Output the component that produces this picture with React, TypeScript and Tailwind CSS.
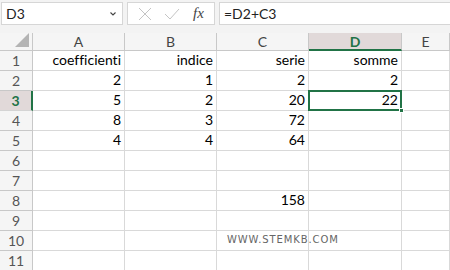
import React from "react";

const cols = ["A", "B", "C", "D", "E"];
const data: Record<number, string[]> = {
  1: ["coefficienti", "indice", "serie", "somme"],
  2: ["2", "1", "2", "2"],
  3: ["5", "2", "20", "22"],
  4: ["8", "3", "72", ""],
  5: ["4", "4", "64", ""],
  8: ["", "", "158", ""],
};

export default function App() {
  const rows = [1, 2, 3, 4, 5, 6, 7, 8, 9, 10, 11];
  return (
    <div className="w-[450px] h-[270px] overflow-hidden bg-white [font-variant-ligatures:none]" style={{ fontFamily: "Lato, 'Liberation Sans', sans-serif" }}>
      {/* toolbar */}
      <div className="h-[33px] bg-[#f3f3f3] flex items-start pt-[2px] pl-[1px]">
        <div className="w-[122px] h-[23px] bg-white border border-[#d6d6d6] flex items-center justify-between px-[4px] text-[14px] text-[#222]">
          <span>D3</span>
          <svg width="8" height="6" viewBox="0 0 8 6" className="mr-[1px]"><path d="M1.5 1.5 L4 4 L6.5 1.5" fill="none" stroke="#444" strokeWidth="1.1" /></svg>
        </div>
        <div className="ml-[4px] w-[88px] h-[23px] bg-white border border-[#d6d6d6] flex items-center">
          <svg width="14" height="14" viewBox="0 0 14 14" className="ml-[10px]"><path d="M1 1 L13 13 M13 1 L1 13" stroke="#c4c4c4" strokeWidth="1" fill="none" /></svg>
          <svg width="16" height="14" viewBox="0 0 16 14" className="ml-[12px]"><path d="M1 7 L6 12 L15 2" stroke="#c4c4c4" strokeWidth="1" fill="none" /></svg>
          <span className="ml-[13px] text-[15px] italic text-[#444]" style={{ fontFamily: "'Liberation Serif', serif" }}>fx</span>
        </div>
        <div className="ml-[4px] flex-1 h-[23px] bg-white border border-[#d6d6d6] border-r-0 flex items-center pl-[4px] text-[14px] text-[#222]">
          =D2+C3
        </div>
      </div>
      {/* grid */}
      <div className="grid grid-cols-[33px_92px_92px_92px_93px_1fr] grid-rows-[18px_repeat(11,20px)]">
        <div className="bg-[#f5f5f5] border-r border-b border-[#c8c8c8] relative">
          <svg width="16" height="16" viewBox="0 0 16 16" className="absolute right-[2px] bottom-[2px]"><path d="M15 1 L15 15 L1 15 Z" fill="#b4b4b4" /></svg>
        </div>
        {cols.map((c) =>
          c === "D" ? (
            <div key={c} className="bg-[#e1d9d9] border-r border-[#c8c8c8] border-b-2 border-b-[#217346] flex items-center justify-center text-[14px] font-bold text-[#217346]">
              {c}
            </div>
          ) : (
            <div key={c} className="bg-[#f5f5f5] border-r border-b border-[#c8c8c8] flex items-center justify-center text-[14px] text-[#444]">
              {c}
            </div>
          )
        )}
        {rows.map((r) => (
          <React.Fragment key={r}>
            {r === 3 ? (
              <div className="bg-[#e1d9d9] border-r-2 border-r-[#217346] border-b border-[#d4d4d4] flex items-center justify-center text-[14px] font-bold text-[#217346]">
                {r}
              </div>
            ) : (
              <div className="bg-[#f5f5f5] border-r border-b border-[#c8c8c8] flex items-center justify-center text-[14px] text-[#555]">
                {r}
              </div>
            )}
            {cols.map((c, ci) => {
              const v = data[r]?.[ci] ?? "";
              const selected = r === 3 && c === "D";
              return (
                <div key={c} className="relative border-r border-b border-[#d9d9d9] flex items-end justify-end pr-[3px] pb-[1px] text-[14px] text-black leading-[18px] overflow-visible whitespace-nowrap">
                  {r === 10 && c === "C" ? (
                    <span className="absolute left-[10px] bottom-[4px] text-[10px] leading-[12px] tracking-[0.9px] text-[#666] z-10" style={{ fontFamily: "'DejaVu Sans', sans-serif" }}>WWW.STEMKB.COM</span>
                  ) : null}
                  {v}
                  {selected ? (
                    <>
                      <div className="absolute left-[-1px] top-[-1px] right-[-1px] bottom-[-1px] border-2 border-[#217346] pointer-events-none" />
                      <div className="absolute right-[-3px] bottom-[-3px] w-[5px] h-[5px] bg-[#217346] border border-white z-10" />
                    </>
                  ) : null}
                </div>
              );
            })}
          </React.Fragment>
        ))}
      </div>
    </div>
  );
}
